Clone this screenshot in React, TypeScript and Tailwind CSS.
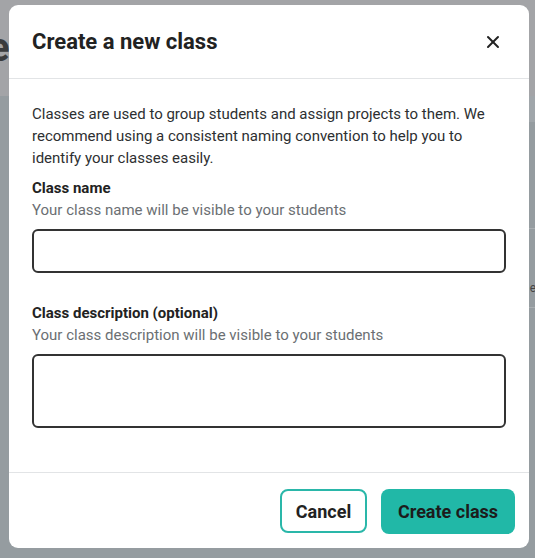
import { X } from 'lucide-react';

function Field({ label, hint, tall }: { label: string; hint: string; tall?: boolean }) {
  return (
    <div className="flex flex-col">
      <label className="text-[15px] leading-[22px] font-bold text-[#222]">{label}</label>
      <p className="text-[15px] leading-[22px] text-[#6b6f73]">{hint}</p>
      {tall ? (
        <textarea className="mt-2 h-[74px] w-full resize-none rounded-[6px] border-2 border-[#333] bg-white" />
      ) : (
        <input className="mt-2 h-[44px] w-full rounded-[6px] border-2 border-[#333] bg-white" />
      )}
    </div>
  );
}

export default function App() {
  return (
    <div className="relative h-[558px] w-[535px] overflow-hidden bg-[#959ca0] font-['Roboto',sans-serif]">
      {/* page behind the overlay */}
      <div className="absolute inset-x-0 top-0 flex h-[96px] items-center bg-[#a3a4a7]">
        <span className="-ml-[12px] text-[40px] font-bold leading-none text-[#3a3b3d]">e</span>
      </div>
      <div className="absolute right-0 top-[96px] h-[26px] w-[10px] bg-[#a0a6aa]" />
      <div className="absolute right-0 top-[228px] h-[80px] w-[10px] border-y border-[#a9aeb1]">
        <span className="absolute -right-[1px] top-[50px] text-[12px] text-[#444]">e</span>
      </div>

      <div className="absolute left-[9px] top-[5px] flex h-[543px] w-[520px] flex-col rounded-[9px] bg-white">
        <div className="flex h-[74px] items-center justify-between border-b border-[#e2e4e6] pl-[23px] pr-[26px]">
          <h2 className="text-[22px] font-bold text-[#222]">Create a new class</h2>
          <X className="h-[20px] w-[20px] text-[#222]" strokeWidth={2.4} />
        </div>

        <div className="flex flex-1 flex-col px-[23px] pt-[24px]">
          <p className="text-[15px] leading-[22px] text-[#2d2f31]">
            Classes are used to group students and assign projects to them. We recommend using a consistent naming
            convention to help you to identify your classes easily.
          </p>
          <div className="mt-[8px] flex flex-col gap-[29px]">
            <Field label="Class name" hint="Your class name will be visible to your students" />
            <Field label="Class description (optional)" hint="Your class description will be visible to your students" tall />
          </div>
        </div>

        <div className="flex items-start justify-end gap-[14px] border-t border-[#e2e4e6] px-[14px] pb-[14px] pt-[16px]">
          <button className="h-[44px] w-[87px] rounded-[8px] border-2 border-[#2ab7a9] bg-white text-[18px] font-bold text-[#222]">
            Cancel
          </button>
          <button className="h-[45px] w-[134px] rounded-[8px] bg-[#21b8a7] text-[18px] font-bold text-[#1c1c1c]">
            Create class
          </button>
        </div>
      </div>
    </div>
  );
}
